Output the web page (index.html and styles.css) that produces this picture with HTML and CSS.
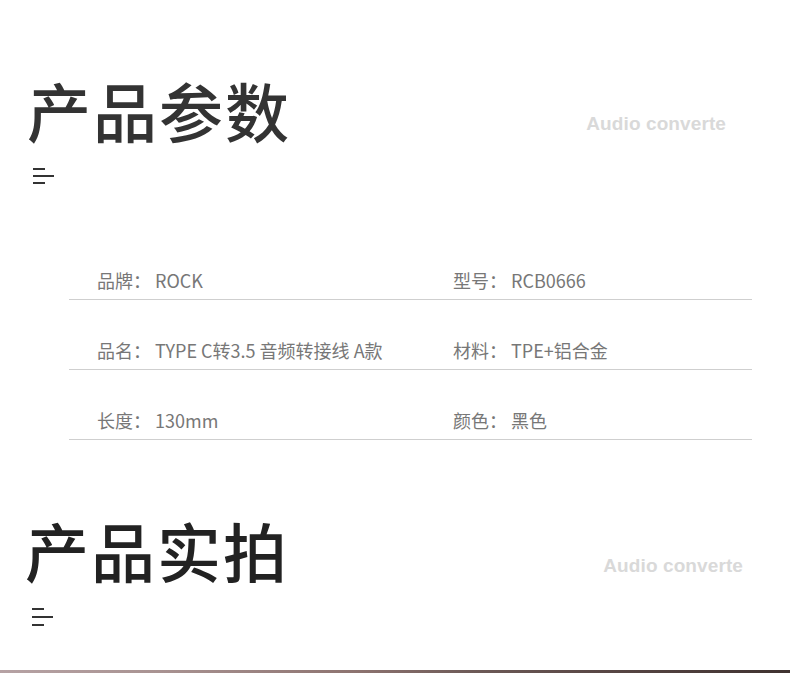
FILE: index.html
```html
<!DOCTYPE html>
<html lang="zh">
<head>
<meta charset="utf-8">
<link rel="stylesheet" href="styles.css">
</head>
<body>
<section class="sec sec-params">
  <div class="head">
    <div class="head-left">
      <h1 class="title">产品参数</h1>
      <div class="menu-icon"><span class="l1"></span><span class="l2"></span><span class="l3"></span></div>
    </div>
    <div class="sub">Audio converte</div>
  </div>
  <div class="table">
    <div class="row">
      <div class="cell"><span class="k">品牌：</span><span class="v">ROCK</span></div>
      <div class="cell"><span class="k">型号：</span><span class="v">RCB0666</span></div>
    </div>
    <div class="row">
      <div class="cell"><span class="k">品名：</span><span class="v">TYPE C转3.5 音频转接线 A款</span></div>
      <div class="cell"><span class="k">材料：</span><span class="v">TPE+铝合金</span></div>
    </div>
    <div class="row">
      <div class="cell"><span class="k">长度：</span><span class="v">130mm</span></div>
      <div class="cell"><span class="k">颜色：</span><span class="v">黑色</span></div>
    </div>
  </div>
</section>
<section class="sec sec-photos">
  <div class="head">
    <div class="head-left">
      <h1 class="title dark">产品实拍</h1>
      <div class="menu-icon"><span class="l1"></span><span class="l2"></span><span class="l3"></span></div>
    </div>
    <div class="sub">Audio converte</div>
  </div>
</section>
<div class="photo-strip"></div>
</body>
</html>
```
FILE: styles.css
```css
html, body {
  margin: 0;
  padding: 0;
  background: #ffffff;
}
body {
  width: 790px;
  height: 673px;
  overflow: hidden;
  font-family: "Noto Sans CJK SC", "Noto Sans", sans-serif;
}
.sec-params {
  padding-top: 77px;
}
.sec-photos {
  padding-top: 77px;
}
.head {
  display: flex;
  justify-content: space-between;
  align-items: flex-start;
  padding-left: 27px;
}
.sec-params .head { padding-right: 64px; }
.sec-photos .head { padding-left: 25px; padding-right: 47px; }
.title {
  margin: 0;
  font-size: 64px;
  line-height: 64px;
  font-weight: 500;
  letter-spacing: 2px;
  color: #333333;
}
.title.dark { color: #222222; }
.menu-icon {
  margin-top: 27px;
  margin-left: 6px;
  display: flex;
  flex-direction: column;
  gap: 5px;
}
.sec-photos .menu-icon { margin-left: 7px; gap: 6px; }
.menu-icon span {
  display: block;
  height: 2px;
  background: #333333;
}
.menu-icon .l1, .menu-icon .l3 { width: 12px; }
.menu-icon .l2 { width: 21px; }
.sub {
  margin-top: 37px;
  font-family: "Liberation Sans", Arial, sans-serif;
  font-weight: 700;
  font-size: 19px;
  line-height: 20px;
  color: #d9d9d9;
  letter-spacing: 0.1px;
}
.sec-photos .sub { margin-top: 39px; }
.table {
  margin: 46px 38px 0 69px;
}
.row {
  display: grid;
  grid-template-columns: 356px 1fr;
  height: 69px;
  align-items: end;
  border-bottom: 1px solid #cfcfcf;
  padding-left: 28px;
  box-sizing: content-box;
}
.cell {
  display: flex;
  font-size: 18px;
  line-height: 24px;
  color: #777777;
  padding-bottom: 7px;
}
.k {
  width: 58px;
  flex: none;
}
.photo-strip {
  position: absolute;
  left: 0;
  top: 670px;
  width: 790px;
  height: 3px;
  background: linear-gradient(90deg, #b6a2a4 0%, #a99392 20%, #8d7370 45%, #6d5a57 60%, #5a4846 75%, #3f3230 100%);
}
```
